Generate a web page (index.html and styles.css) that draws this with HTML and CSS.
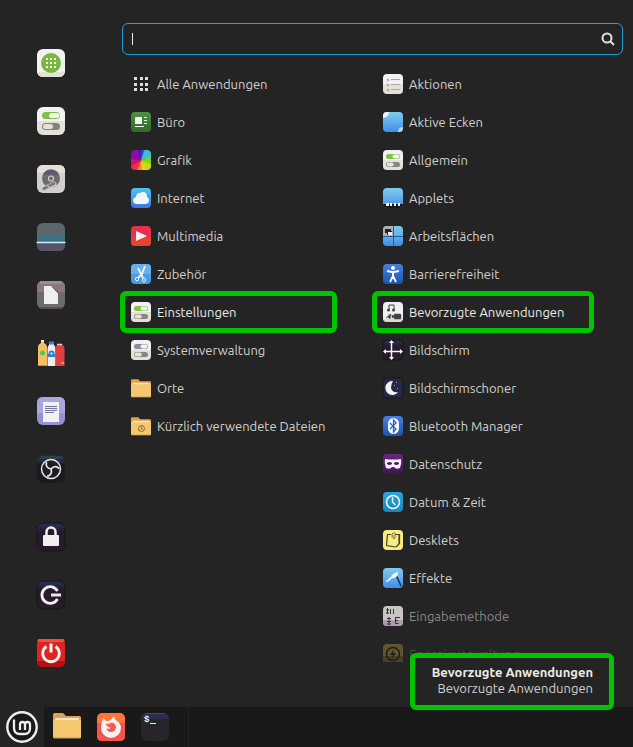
FILE: index.html
```html
<!DOCTYPE html>
<html lang="de">
<head>
<meta charset="utf-8">
<meta name="viewport" content="width=device-width, initial-scale=1">
<title>Startmenü</title>
<link rel="stylesheet" href="styles.css">
</head>
<body>
<svg class="defs" aria-hidden="true">
  <defs>
    <linearGradient id="g-white" x2="0" y2="1"><stop offset=".5" stop-color="#f2f2f2"/><stop offset=".5" stop-color="#e6e1d8"/></linearGradient>
    <linearGradient id="g-green" x2="0" y2="1"><stop offset="0" stop-color="#4d9140"/><stop offset="1" stop-color="#336a29"/></linearGradient>
    <linearGradient id="g-sky" x2="0" y2="1"><stop offset="0" stop-color="#7fcbea"/><stop offset=".5" stop-color="#62aeec"/><stop offset="1" stop-color="#3f8de6"/></linearGradient>
    <linearGradient id="g-cloud" x2="0" y2="1"><stop offset="0" stop-color="#4ac8ee"/><stop offset="1" stop-color="#3f73e6"/></linearGradient>
    <linearGradient id="g-blue" x2="0" y2="1"><stop offset="0" stop-color="#4880e2"/><stop offset="1" stop-color="#1c54b4"/></linearGradient>
    <linearGradient id="g-dark" x2="0" y2="1"><stop offset=".12" stop-color="#272d4b"/><stop offset=".3" stop-color="#261a2b"/></linearGradient>
    <linearGradient id="g-purple" x2="0" y2="1"><stop offset="0" stop-color="#702382"/><stop offset="1" stop-color="#3d184c"/></linearGradient>
    <linearGradient id="g-clock" x2="0" y2="1"><stop offset="0" stop-color="#2aa5e0"/><stop offset="1" stop-color="#1b86b8"/></linearGradient>
    <symbol id="switches" viewBox="0 0 22 22">
      <rect x="1" y="1" width="20" height="20" rx="4" fill="url(#g-white)"/>
      <rect x="4" y="5" width="14" height="5" rx="2.500" fill="currentColor"/>
      <rect x="10.500" y="5.500" width="7" height="4" rx="2" fill="#f4f4f4"/>
      <rect x="4" y="13" width="14" height="5" rx="2.500" fill="#858585"/>
      <rect x="4.700" y="13.600" width="7" height="3.800" rx="1.900" fill="#e6e1d8"/>
    </symbol>
    <symbol id="folder" viewBox="0 0 28 26">
      <path d="M0 1.500Q0 0 1.500 0H10l3 3h13.500Q28 3 28 4.500V12H0z" fill="#e6a04a"/>
      <rect x="2" y="5" width="24" height="5" rx="1" fill="#ece8e2"/>
      <path d="M0 8q0-1 1-1h26q1 0 1 1v16q0 1-1 1H1q-1 0-1-1z" fill="#f5c76e"/>
      <path d="M0 24q0 1 1 1h26q1 0 1-1" fill="none" stroke="#c99a51"/>
    </symbol>
  </defs>
</svg>

<main class="menu">
  <nav class="favorites" aria-label="Favoriten">
    <button class="fav" aria-label="Anwendungsverwaltung"><svg viewBox="0 0 30 30"><rect x="1" y="1" width="28" height="28" rx="6" fill="#f2f2f2"/><path d="M1 24h28q-1 5-6 5H7q-5 0-6-5z" fill="#e6e0d6"/><circle cx="15" cy="15" r="10" fill="#78b83c"/><g fill="#f4f4f4"><path d="M10 10h2v2h-2zM14 10h2v2h-2zM18 10h2v2h-2zM10 14h2v2h-2zM14 14h2v2h-2zM18 14h2v2h-2zM10 18h2v2h-2zM14 18h2v2h-2zM18 18h2v2h-2z"/></g></svg></button>
    <button class="fav" aria-label="Systemeinstellungen"><svg viewBox="0 0 30 30"><rect x="1" y="1" width="28" height="28" rx="6" fill="url(#g-white)"/><rect x="6" y="6" width="18" height="7" rx="3.500" fill="#7cc243"/><rect x="13" y="7" width="10.500" height="5" rx="2.500" fill="#f4f4f4"/><rect x="6" y="17" width="18" height="7" rx="3.500" fill="#858080"/><rect x="7" y="18" width="10" height="5" rx="2.500" fill="#e6e1d8"/></svg></button>
    <button class="fav" aria-label="Laufwerke"><svg viewBox="0 0 30 30"><rect x="1" y="1" width="28" height="28" rx="6" fill="#cfcfcf"/><path d="M1 9V7q0-6 6-6h16q6 0 6 6v2z" fill="#e5e0d7"/><circle cx="15" cy="14.500" r="9" fill="#6b6b6b"/><path d="M7 10.500a9 9 0 0 1 16 0z" fill="#625672"/><circle cx="15" cy="14.500" r="2.500" fill="none" stroke="#cfcfcf" stroke-width="1.200"/><path d="M8 25l10-5" stroke="#d0cccc" stroke-width="5" stroke-linecap="round"/><path d="M8 24.500l10-5" stroke="#867272" stroke-width="3" stroke-linecap="round"/><path d="M11 22l3 1" stroke="#d0cccc"/></svg></button>
    <button class="fav" aria-label="Schreibtisch"><svg viewBox="0 0 30 30"><rect x="1" y="1" width="28" height="28" rx="6" fill="#5a686d"/><path d="M1 14h28v7H1z" fill="#3e7386"/><path d="M1 21h28v2q0 6-6 6H7q-6 0-6-6z" fill="#59536a"/><path d="M.5 20.500h29" stroke="#c7f3fb" stroke-width="1.500"/></svg></button>
    <button class="fav" aria-label="Textbearbeitung"><svg viewBox="0 0 30 30"><rect x="1" y="1" width="28" height="28" rx="6" fill="#6d6b6b"/><path d="M1 12V7q0-6 6-6h16q6 0 6 6v5z" fill="#8e7779"/><path d="M4 2.500h22" stroke="#929292" stroke-width="3"/><path d="M3 27q2 2 4 2h16q2 0 4-2z" fill="#5b4e62"/><path d="M8 6h14v18H8z" fill="#efefef"/><path d="M16 6h6v7z" fill="#87777a"/><path d="M15.500 6l6.500 7" stroke="#4d494b"/></svg></button>
    <button class="fav" aria-label="Zeichnen"><svg viewBox="0 0 30 30"><path d="M5 5V3q0-1 1-1h1q1 0 1 1v2q3 1 3 5v18H2V10q0-4 3-5z" fill="#f5c160"/><path d="M5 2h3v2H5z" fill="#d9edda"/><circle cx="6.500" cy="15" r="2.500" fill="#53c56c"/><path d="M2 27.500h9" stroke="#e18537"/><path d="M13 4h5v3q1.500 1 1.500 4v17h-8V11q0-3 1.500-4z" fill="#eee"/><rect x="13" y="3.500" width="5" height="3" fill="#477eca"/><path d="M11.500 16h8v3h-8z" fill="#337ed2"/><circle cx="15.500" cy="15.500" r="3" fill="#337ed2"/><circle cx="15.500" cy="15.500" r="1" fill="#fff"/><path d="M19.500 10q0-2 2-3V6h5v1q2 1 2 3v18h-9z" fill="#e13e3e"/><path d="M21 6.500h5" stroke="#d7d0d0" stroke-width="1.500"/><path d="M25 25h3" stroke="#f2cccc"/></svg></button>
    <button class="fav" aria-label="Dokument"><svg viewBox="0 0 30 30"><rect x="1" y="1" width="28" height="28" rx="6" fill="#9592d5"/><path d="M1 17V7q0-6 6-6h16q6 0 6 6v10z" fill="#aaa7dc"/><path d="M7 6h16v20H7z" fill="#f1f1f1"/><path d="M9 10.500h12M9 12.500h12M9 14.500h12M9 16.500h9" stroke="#7773a3"/></svg></button>
    <button class="fav" aria-label="OBS Studio"><svg viewBox="0 0 30 30"><rect x="1" y="1" width="28" height="28" rx="6" fill="#191b1f"/><path d="M1 9V7q0-6 6-6h16q6 0 6 6v2z" fill="#252b46"/><path d="M4 3.500h22" stroke="#284146" stroke-width="3"/><circle cx="15" cy="15" r="9.500" fill="#201d24" stroke="#e6e4e6" stroke-width="1.500"/><g fill="none" stroke="#e6e4e6" stroke-width="1.800"><path d="M15 15C11 14 9.500 12 10.500 8"/><path d="M15 15C11 14 9.500 12 10.500 8" transform="rotate(120 15 15)"/><path d="M15 15C11 14 9.500 12 10.500 8" transform="rotate(240 15 15)"/></g></svg></button>
    <button class="fav session" aria-label="Bildschirm sperren"><svg viewBox="0 0 30 30"><rect x="1" y="1" width="28" height="28" rx="6" fill="url(#g-dark)" stroke="#17151a"/><path d="M10.500 14V10a4.500 4.500 0 0 1 9 0V14" fill="none" stroke="#f0f0f0" stroke-width="2.500"/><rect x="7" y="13" width="16" height="11" rx="1" fill="#f0f0f0"/></svg></button>
    <button class="fav" aria-label="Abmelden"><svg viewBox="0 0 30 30"><rect x="1" y="1" width="28" height="28" rx="6" fill="url(#g-dark)" stroke="#17151a"/><path d="M21.500 11a8.300 8.300 0 1 0 0 8" fill="none" stroke="#f0f0f0" stroke-width="2.800"/><path d="M15 15h10" stroke="#e5e7eb" stroke-width="3"/></svg></button>
    <button class="fav" aria-label="Herunterfahren"><svg viewBox="0 0 30 30"><rect x="1" y="1" width="28" height="28" rx="5" fill="#de2420"/><path d="M1 23h28q0 6-6 6H7q-6 0-6-6z" fill="#b5120f"/><path d="M3 2.500h24" stroke="#ef4e43" stroke-width="3" stroke-linecap="round"/><path d="M10.500 8.500a8.300 8.300 0 1 0 9 0" fill="none" stroke="#f4f2f2" stroke-width="2.800"/><path d="M15 5.500v9" stroke="#f4f2f2" stroke-width="3"/></svg></button>
  </nav>

  <section class="browser">
    <div class="search">
      <span class="caret"></span>
      <input type="text" aria-label="Suchen">
      <svg class="lens" viewBox="0 0 14 14"><circle cx="6" cy="6" r="4.500"/><path d="M9 9l4 4"/></svg>
    </div>
    <div class="columns">
      <ul class="list">
        <li><button class="item"><svg viewBox="0 0 22 22"><path fill="#e0dedb" d="M4 4h3v3H4zM10 4h3v3h-3zM15 4h3v3h-3zM4 10h3v3H4zM10 10h3v3h-3zM15 10h3v3h-3zM4 15h3v3H4zM10 15h3v3h-3zM15 15h3v3h-3z"/></svg>Alle Anwendungen</button></li>
        <li><button class="item"><svg viewBox="0 0 22 22"><rect x="1" y="1" width="20" height="20" rx="4" fill="url(#g-green)"/><path d="M5 6h7v7H5zM14 6h3v1h-3zM14 9h3v1h-3zM14 12h3v1h-3zM5 15h9v1H5z" fill="#f2f4f1"/></svg>Büro</button></li>
        <li><button class="item"><svg viewBox="0 0 22 22"><defs><clipPath id="tile"><rect x="1" y="1" width="20" height="20" rx="4"/></clipPath></defs><g clip-path="url(#tile)"><path d="M11 11L6 0h7z" fill="#5713bd"/><path d="M11 11L12 0h4z" fill="#2c55c8"/><path d="M11 11L15 0h7v6z" fill="#47b9d6"/><path d="M11 11L22 5v5z" fill="#4bd08a"/><path d="M11 11L22 9v8z" fill="#7ed617"/><path d="M11 11L22 16v6h-4z" fill="#c4dd12"/><path d="M11 11L19 22h-8z" fill="#f0cf17"/><path d="M11 11L12 22H6z" fill="#f28a2d"/><path d="M11 11L7 22H0v-5z" fill="#ea3340"/><path d="M11 11L0 18V9z" fill="#c81575"/><path d="M11 11L0 10V0h7z" fill="#8e0ba3"/></g></svg>Grafik</button></li>
        <li><button class="item"><svg viewBox="0 0 22 22"><rect x="1" y="1" width="20" height="20" rx="4" fill="url(#g-cloud)"/><path d="M6 17q-3-1-3-4 0-2 3-3 0-4 4-4 1-1 3-1 4 0 4 5 2 1 2 3 0 3-3 4z" fill="#f4f5f7"/></svg>Internet</button></li>
        <li><button class="item"><svg viewBox="0 0 22 22"><rect x="1" y="1" width="20" height="20" rx="4" fill="#ea2e4e"/><path d="M1 12h20v5q0 4-4 4H5q-4 0-4-4z" fill="#e64330"/><path d="M6 6l11 5-11 5z" fill="#f4f2f2"/></svg>Multimedia</button></li>
        <li><button class="item"><svg viewBox="0 0 22 22"><rect x="1" y="1" width="20" height="20" rx="4" fill="#4c9ae8"/><path d="M1 11V5q0-4 4-4h12q4 0 4 4v6z" fill="#68b0ec"/><path d="M8 5l5 10M15 3l-3 8-4 4" fill="none" stroke="#f2f5f8" stroke-width="1.800"/><circle cx="7" cy="16" r="1.700" fill="none" stroke="#f2f5f8"/><ellipse cx="14" cy="17" rx="1.500" ry="2" fill="none" stroke="#f2f5f8"/></svg>Zubehör</button></li>
        <li><button class="item active marked mark-category"><svg class="on"><use href="#switches"/></svg>Einstellungen</button></li>
        <li><button class="item"><svg class="off"><use href="#switches"/></svg>Systemverwaltung</button></li>
        <li><button class="item"><svg viewBox="0 0 22 22"><use href="#folder" x="1" y="2" width="20" height="19"/></svg>Orte</button></li>
        <li><button class="item"><svg viewBox="0 0 22 22"><use href="#folder" x="1" y="2" width="20" height="19"/><circle cx="11.500" cy="13.500" r="3" fill="none" stroke="#8b6b3d"/><path d="M11.500 11.500v2.500h1.500M8 15h2" fill="none" stroke="#8b6b3d"/></svg>Kürzlich verwendete Dateien</button></li>
      </ul>
      <ul class="list">
        <li><button class="item"><svg viewBox="0 0 22 22"><rect x="1" y="1" width="20" height="20" rx="4" fill="url(#g-white)"/><g fill="none" stroke="#aaa6a2"><circle cx="6" cy="7" r="1"/><circle cx="6" cy="12" r="1"/><circle cx="6" cy="17" r="1"/><path d="M9 6.500h9M9 11.500h9M9 16.500h9"/></g></svg>Aktionen</button></li>
        <li><button class="item"><svg viewBox="0 0 22 22"><rect x="1" y="1" width="20" height="20" rx="4" fill="url(#g-sky)"/><path d="M1 7V5q0-4 4-4h2q0 5-6 6z" fill="#edf5f8"/><path d="M21 16v1q0 4-4 4h-1q0-5 5-5z" fill="#b8d5ee"/></svg>Aktive Ecken</button></li>
        <li><button class="item"><svg class="on"><use href="#switches"/></svg>Allgemein</button></li>
        <li><button class="item"><svg viewBox="0 0 22 22"><rect x="1" y="1" width="20" height="20" rx="4" fill="url(#g-sky)"/><path d="M1 17h20q0 4-4 4H5q-4 0-4-4z" fill="#17191f"/><path d="M4 16h3v3H4zM8 16h2v3H8zM12 16h2v3h-2zM16 16h2v3h-2z" fill="#f4f4f4"/></svg>Applets</button></li>
        <li><button class="item"><svg viewBox="0 0 22 22"><rect x="1" y="1" width="20" height="20" rx="4" fill="url(#g-sky)"/><path d="M1 11V5q0-4 4-4h6v10z" fill="#b3afb1"/><path d="M11.500 1v20M1 11.500h20" stroke="#285b8e"/><path d="M3 4h6v2h1v4H5V8H3z" fill="#242424"/><path d="M6 7h4v3H6z" fill="#f0f0f0"/></svg>Arbeitsflächen</button></li>
        <li><button class="item"><svg viewBox="0 0 22 22"><rect x="1" y="1" width="20" height="20" rx="4" fill="url(#g-blue)"/><circle cx="11" cy="5" r="2" fill="#fff"/><path d="M5 8l5 1h2l5-1M11 9v4l-3 6M11 13l3 6" fill="none" stroke="#fff" stroke-width="1.800"/><path d="M10 9h2v5h-2z" fill="#fff"/></svg>Barrierefreiheit</button></li>
        <li><button class="item active marked mark-app"><svg viewBox="0 0 22 22"><rect x="1" y="1" width="20" height="20" rx="4" fill="#efefee"/><path d="M1 18h20q-1 3-4 3H5q-3 0-4-3z" fill="#ded9cf"/><path d="M7 9V4h5v5" fill="none" stroke="#414141"/><circle cx="6.500" cy="9" r="1.500" fill="#414141"/><circle cx="11.500" cy="9" r="1.500" fill="#414141"/><path d="M4 17l5-4-1 5-2-2zM6 14l2-1M12 14q0-1 1-1h5q1 0 1 1v3q0 1-1 1h-5q-1 0-1-1zM12 15l-2-1v3l2-1" fill="#414141" stroke="#414141" stroke-width=".5"/></svg>Bevorzugte Anwendungen</button></li>
        <li><button class="item"><svg viewBox="0 0 22 22"><rect x="1" y="1" width="20" height="20" rx="4" fill="url(#g-dark)" stroke="#17151a"/><path d="M9.500 3v17M2 12.500h18" stroke="#f4f4f4" stroke-width="1.500"/><path d="M9.500 1l2.500 3H7zM9.500 21L7 18h5zM1 12.500L4 10v5zM21 12.500L18 10v5z" fill="#f4f4f4"/></svg>Bildschirm</button></li>
        <li><button class="item"><svg viewBox="0 0 22 22"><rect x="1" y="1" width="20" height="20" rx="4" fill="#252a49" stroke="#17151a"/><path d="M11 4a7 7 0 1 0 5 11q-6 1-7-4 0-4 2-7z" fill="#f2f2f2"/><path d="M14 5h1v1h-1zM12 8h1v1h-1zM15 11h1v1h-1z" fill="#b39aa6"/></svg>Bildschirmschoner</button></li>
        <li><button class="item"><svg viewBox="0 0 22 22"><rect x="1" y="1" width="20" height="20" rx="4" fill="url(#g-blue)"/><rect x="6" y="3" width="11" height="16" rx="5.500" fill="#f4f6f9"/><path d="M8 8l6 6-2.500 3V5L14 8l-6 6" fill="none" stroke="#2461c8" stroke-width="1.200"/></svg>Bluetooth Manager</button></li>
        <li><button class="item"><svg viewBox="0 0 22 22"><rect x="1" y="1" width="20" height="20" rx="4" fill="url(#g-purple)"/><path d="M3 6q8 1 16 0 1 4-1 9-4 2-6-1h-2q-2 3-6 1-2-5-1-9z" fill="#f2f0f3"/><path d="M5 10q3-2 5 0v1q-3 2-5 0zM12 10q3-2 5 0v1q-3 2-5 0z" fill="#4a1d59"/></svg>Datenschutz</button></li>
        <li><button class="item"><svg viewBox="0 0 22 22"><rect x="1" y="1" width="20" height="20" rx="4" fill="url(#g-clock)"/><circle cx="11" cy="11" r="6.500" fill="none" stroke="#f1f6f8" stroke-width="1.500"/><path d="M10.500 6v5l3 3" fill="none" stroke="#f1f6f8" stroke-width="1.400"/></svg>Datum &amp; Zeit</button></li>
        <li><button class="item"><svg viewBox="0 0 22 22"><rect x="1" y="1" width="20" height="20" rx="4" fill="#fbec82"/><path d="M9 5.500H5.500L4.500 16.500l9 1.500M13 5.500h4.500v9L14 18M17 6v9" fill="none" stroke="#47432c" stroke-width="1.200"/><path d="M10 8V5q1-2 3-1v5q-1 2-2 0V6" fill="none" stroke="#6b643f" stroke-width=".8"/></svg>Desklets</button></li>
        <li><button class="item"><svg viewBox="0 0 22 22"><rect x="1" y="1" width="20" height="20" rx="4" fill="url(#g-sky)"/><path d="M14 8l5 11" stroke="#232c39" stroke-width="1.500"/><path d="M16 5q1 4-4 6-2 0-3 1-2 3-6 3 1-2 3-2 0-2 3-3 1-4 7-5z" fill="#f1f8fc"/></svg>Effekte</button></li>
        <li><button class="item fading"><svg viewBox="0 0 22 22"><rect x="1" y="1" width="20" height="20" rx="4" fill="#f2efed"/><path d="M1 15h20v2q0 4-4 4H5q-4 0-4-4z" fill="#cdbbd2"/><path d="M4 5h3M4 8h3M5.500 3v6M8.500 4v5M11.500 4v5M5 13.500h4M5 16.500h4M5 19h4M7 12v8M13 12.500h5M13 15.500h3M13.500 12v6.500h3" fill="none" stroke="#3b363c"/></svg>Eingabemethode</button></li>
        <li><button class="item faded"><svg viewBox="0 0 22 22"><rect x="1" y="1" width="20" height="20" rx="4" fill="#e9c945"/><path d="M1 13h20v4q0 4-4 4H5q-4 0-4-4z" fill="#a07a10"/><circle cx="11" cy="11" r="6.500" fill="none" stroke="#111" stroke-width="1.500"/><path d="M12 6l-4 6h3l-1 4 4-6h-3z" fill="#111"/></svg>Energieverwaltung</button></li>
      </ul>
    </div>
  </section>

  <aside class="summary">
    <strong>Bevorzugte Anwendungen</strong>
    <span>Bevorzugte Anwendungen</span>
  </aside>
</main>

<footer class="taskbar">
  <button class="task start" aria-label="Menü"><svg viewBox="0 0 32 32"><circle cx="16" cy="16" r="14.700" fill="#191919" stroke="#eee" stroke-width="2.400"/><path d="M8 8.500V17q0 6 6 6h4.500q5.500 0 5.500-5.500v-4a2.500 2.500 0 0 0-5 0V19M19 13.500a2.500 2.500 0 0 0-5 0V19" fill="none" stroke="#eee" stroke-width="2.300"/></svg></button>
  <div class="launchers">
    <button class="task" aria-label="Dateien"><svg viewBox="0 0 32 32"><use href="#folder" x="2" y="2" width="28" height="26"/></svg></button>
    <button class="task" aria-label="Firefox"><svg viewBox="0 0 32 32"><rect x="2" y="2" width="28" height="28" rx="5" fill="#ff7439"/><path d="M2 12h28v13q0 5-5 5H7q-5 0-5-5z" fill="#f45350"/><path d="M9 6.500q0 2 2 3.500 1.500-.5 3 0 3-2 5-5 0 3 3 5 4 3 4 7a10 10 0 0 1-20 0q0-6 3-10.500z" fill="#f2f2f2"/><path d="M11 12.500q4 1 5-1 5 .5 5 5-1 4.500-5 4.500-4 0-4.500-4 2 2 4 0-1-1.500-3-1.500-1.500-1-1.500-3z" fill="#f65b4b"/></svg></button>
    <button class="task" aria-label="Terminal"><svg viewBox="0 0 32 32"><rect x="2" y="2" width="28" height="28" rx="6" fill="#26262a"/><path d="M2 8q0-6 6-6h16q6 0 6 6z" fill="#292e4c"/><path d="M6 2.500h20" stroke="#4a4a4c"/><text class="prompt" x="5" y="11">$</text><path d="M11 12.500h6" stroke="#eee"/></svg></button>
  </div>
</footer>
</body>
</html>
```

FILE: styles.css
```css
:root {
  --panel: #242424;
  --bar: #191919;
  --text: #d2d0cc;
  --bright: #ecebe8;
  --accent: #1f9ede;
  --marker: #00c400;
}

*, *::after { box-sizing: border-box; }

body {
  margin: 0;
  min-height: 100vh;
  display: flex;
  flex-direction: column;
  background: var(--panel);
  color: var(--text);
  font: 13px/16px Ubuntu, "Noto Sans", "Open Sans", sans-serif;
}

button {
  border: 0;
  padding: 0;
  background: none;
  color: inherit;
  font: inherit;
}

svg { display: block; flex: none; }

.defs { position: absolute; width: 0; height: 0; }

.menu {
  position: relative;
  flex: 1;
  display: flex;
}

.favorites {
  flex: none;
  width: 102px;
  padding-top: 48px;
  display: flex;
  flex-direction: column;
  align-items: center;
  gap: 28px;
}

.fav svg { width: 30px; height: 30px; }
.session { margin-top: 10px; }

.browser {
  flex: 1;
  padding: 23px 10px 0 20px;
}

.search {
  display: flex;
  align-items: center;
  height: 32px;
  padding: 0 7px 0 8px;
  border: 1px solid var(--accent);
  border-radius: 6px;
}

.caret {
  width: 1px;
  height: 12px;
  margin-left: 1px;
  background: var(--bright);
}

.search input {
  flex: 1;
  min-width: 0;
  border: 0;
  outline: 0;
  background: none;
  color: inherit;
  font: inherit;
}

.lens {
  width: 14px;
  height: 14px;
  fill: none;
  stroke: #e2e0dc;
  stroke-width: 2;
}

.columns {
  display: grid;
  grid-template-columns: 1fr 1fr;
  gap: 3px;
  margin-top: 10px;
}

.list {
  margin: 0;
  padding: 0;
  list-style: none;
}

.item {
  position: relative;
  display: flex;
  align-items: center;
  gap: 5px;
  width: 100%;
  height: 38px;
  padding-left: 8px;
  white-space: nowrap;
}

.item svg { width: 22px; height: 22px; }
.item .on { color: #7cc243; }
.item .off { color: #9187a0; }
.active { color: var(--bright); }
.fading { color: #888785; }
.fading svg { opacity: 0.8; }

.faded {
  color: #4a4a49;
  clip-path: inset(0 0 11px);
}

.faded svg { opacity: 0.3; }

.marked::after {
  content: "";
  position: absolute;
  top: -2px;
  left: -2px;
  height: 42px;
  border: 5px solid var(--marker);
  border-radius: 6px;
}

.mark-category::after { width: 217px; }
.mark-app::after { width: 222px; }

.summary {
  position: absolute;
  right: 19px;
  bottom: -3px;
  z-index: 1;
  display: flex;
  flex-direction: column;
  align-items: flex-end;
  min-width: 204px;
  padding: 6px 16px 9px 9px;
  border: 5px solid var(--marker);
  border-radius: 6px;
  background: var(--panel);
}

.summary strong { color: var(--bright); }

.taskbar {
  display: flex;
  height: 40px;
  background: var(--bar);
}

.task {
  display: grid;
  place-items: center;
  width: 44px;
  height: 40px;
}

.task svg { width: 32px; height: 32px; }
.start { background: var(--panel); }

.launchers {
  display: flex;
  padding: 0 11px 0 1px;
  border-right: 1px solid #242424;
}

.prompt {
  fill: #eee;
  font: bold 9px "Liberation Mono", monospace;
}
```
